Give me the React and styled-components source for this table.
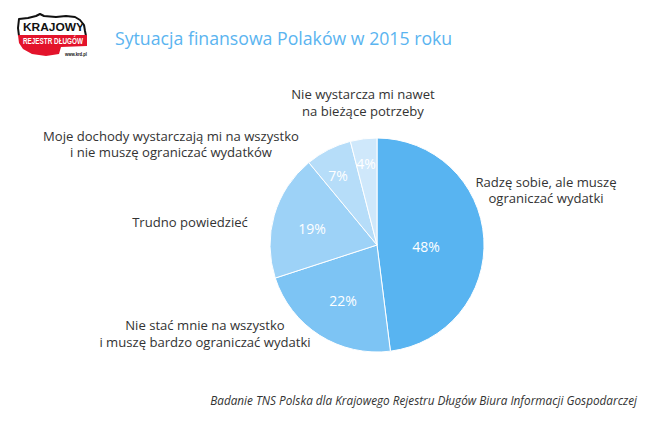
import React from "react";
import styled, { createGlobalStyle } from "styled-components";

const Global = createGlobalStyle`
  html, body { margin: 0; padding: 0; background: #ffffff; }
  body { font-family: "Open Sans", "Liberation Sans", sans-serif; }
`;

const Page = styled.div`
  width: 645px;
  height: 434px;
  background: #ffffff;
  display: flex;
  flex-direction: column;
  overflow: hidden;
`;

const Header = styled.header`
  display: flex;
  align-items: center;
  gap: 25px;
  padding: 12px 0 0 14px;
  height: 50px;
`;

const Title = styled.h1`
  margin: 0;
  font-family: "Open Sans", sans-serif;
  font-weight: 400;
  font-size: 17.7px;
  line-height: 24px;
  color: #5ab4f0;
  padding-top: 2px;
`;

const Chart = styled.svg`
  display: block;
  width: 645px;
  height: 318px;
  font-family: "Open Sans", sans-serif;
`;

const Footer = styled.footer`
  padding: 12px 8px 0 0;
  text-align: right;
  font-family: "Open Sans", sans-serif;
  font-style: italic;
  font-size: 11.75px;
  line-height: 16px;
  color: #333333;
`;

const LabelText = styled.text`
  font-size: 13.1px;
  fill: #333333;
`;

const PctText = styled.text`
  font-size: 14px;
  fill: #ffffff;
`;

const CX = 377;
const CY = 245;
const R = 107;

const slices = [
  { v: 48, color: "#58b4f1" },
  { v: 22, color: "#7dc4f4" },
  { v: 19, color: "#9dd2f7" },
  { v: 7, color: "#b6ddf9" },
  { v: 4, color: "#cfe8fb" },
];

const pctLabels = [
  { t: "48%", x: 426, y: 252 },
  { t: "22%", x: 343, y: 306 },
  { t: "19%", x: 312, y: 234 },
  { t: "7%", x: 338, y: 181 },
  { t: "4%", x: 366, y: 169 },
];

const outerLabels = [
  { x: 363, lines: [["Nie wystarcza mi nawet", 99], ["na bieżące potrzeby", 116]] },
  { x: 171, lines: [["Moje dochody wystarczają mi na wszystko", 141], ["i nie muszę ograniczać wydatków", 157]] },
  { x: 190, lines: [["Trudno powiedzieć", 227]] },
  { x: 546, lines: [["Radzę sobie, ale muszę", 187], ["ograniczać wydatki", 203]] },
  { x: 205, lines: [["Nie stać mnie na wszystko", 330], ["i muszę bardzo ograniczać wydatki", 347]] },
];

function pt(deg) {
  const a = (deg * Math.PI) / 180;
  return [CX + R * Math.sin(a), CY - R * Math.cos(a)];
}

function slicePaths() {
  let start = 0;
  return slices.map((s) => {
    const end = start + s.v * 3.6;
    const [x1, y1] = pt(start);
    const [x2, y2] = pt(end);
    const large = end - start > 180 ? 1 : 0;
    const d = `M${CX},${CY} L${x1.toFixed(2)},${y1.toFixed(2)} A${R},${R} 0 ${large} 1 ${x2.toFixed(2)},${y2.toFixed(2)} Z`;
    start = end;
    return { d, color: s.color };
  });
}

function Logo() {
  return (
    <svg width="76" height="50" viewBox="14 12 76 50" aria-label="Krajowy Rejestr Długów">
      <path
        d="M19,36 L18,28 L19,19 L28,18 L36,16 L40,14 L44,16 L56,17 L66,16 L75,17 L80,20 L84,25 L85,31 L86,36"
        fill="#ffffff"
        stroke="#111111"
        strokeWidth="2"
        strokeLinejoin="round"
      />
      <path
        d="M18,35 L87,35 L87,46 L61,47 L59,54 L46,56 L32,54 L23,49 L19,43 Z"
        fill="#e3132b"
      />
      <text
        x="23"
        y="31"
        textLength="61"
        lengthAdjust="spacingAndGlyphs"
        fontFamily="Liberation Sans, Arial, sans-serif"
        fontWeight="700"
        fontSize="11.3"
        fill="#111111"
      >
        KRAJOWY
      </text>
      <text
        x="23"
        y="44"
        textLength="60"
        lengthAdjust="spacingAndGlyphs"
        fontFamily="Liberation Sans, Arial, sans-serif"
        fontWeight="700"
        fontSize="9.4"
        fill="#ffffff"
      >
        REJESTR DŁUGÓW
      </text>
      <text
        x="65"
        y="55.5"
        textLength="22"
        lengthAdjust="spacingAndGlyphs"
        fontFamily="Liberation Sans, Arial, sans-serif"
        fontWeight="700"
        fontSize="5"
        fill="#111111"
      >
        www.krd.pl
      </text>
    </svg>
  );
}

export default function App() {
  const paths = slicePaths();
  return (
    <>
      <Global />
      <Page>
        <Header>
          <Logo />
          <Title>Sytuacja finansowa Polaków w 2015 roku</Title>
        </Header>
        <Chart viewBox="0 62 645 318">
          {paths.map((p, i) => (
            <path key={i} d={p.d} fill={p.color} stroke="#ffffff" strokeWidth="1" strokeLinejoin="round" />
          ))}
          {pctLabels.map((l) => (
            <PctText key={l.t} x={l.x} y={l.y} textAnchor="middle">
              {l.t}
            </PctText>
          ))}
          {outerLabels.map((g, i) =>
            g.lines.map(([t, y]) => (
              <LabelText key={t} x={g.x} y={y} textAnchor="middle">
                {t}
              </LabelText>
            ))
          )}
        </Chart>
        <Footer>Badanie TNS Polska dla Krajowego Rejestru Długów Biura Informacji Gospodarczej</Footer>
      </Page>
    </>
  );
}
